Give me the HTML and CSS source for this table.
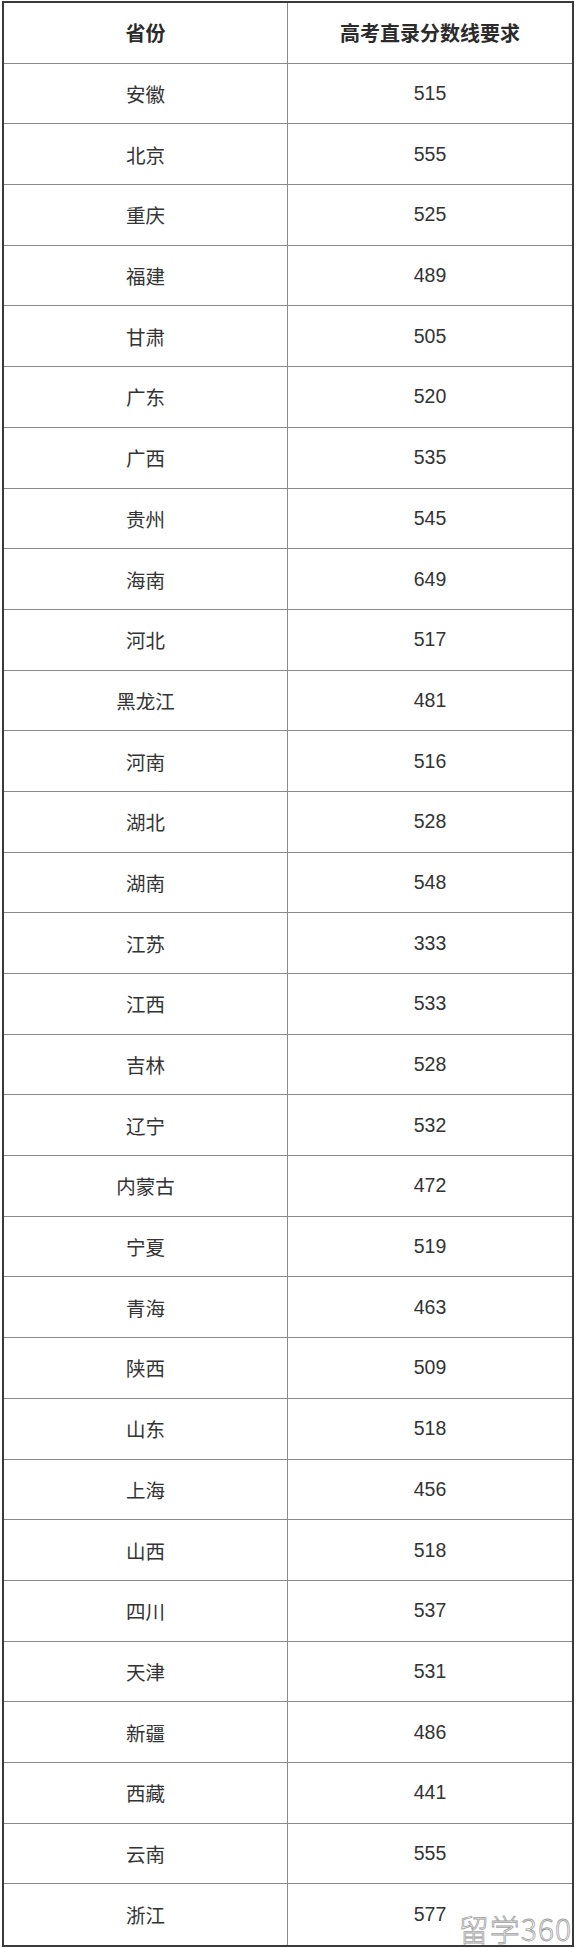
FILE: index.html
```html
<!DOCTYPE html>
<html lang="zh">
<head>
<meta charset="utf-8">
<title>高考直录分数线要求</title>
<link rel="stylesheet" href="styles.css">
</head>
<body>
<div class="page">
<table class="scores">
<thead>
<tr><th>省份</th><th>高考直录分数线要求</th></tr>
</thead>
<tbody>
<tr><td>安徽</td><td>515</td></tr>
<tr><td>北京</td><td>555</td></tr>
<tr><td>重庆</td><td>525</td></tr>
<tr><td>福建</td><td>489</td></tr>
<tr><td>甘肃</td><td>505</td></tr>
<tr><td>广东</td><td>520</td></tr>
<tr><td>广西</td><td>535</td></tr>
<tr><td>贵州</td><td>545</td></tr>
<tr><td>海南</td><td>649</td></tr>
<tr><td>河北</td><td>517</td></tr>
<tr><td>黑龙江</td><td>481</td></tr>
<tr><td>河南</td><td>516</td></tr>
<tr><td>湖北</td><td>528</td></tr>
<tr><td>湖南</td><td>548</td></tr>
<tr><td>江苏</td><td>333</td></tr>
<tr><td>江西</td><td>533</td></tr>
<tr><td>吉林</td><td>528</td></tr>
<tr><td>辽宁</td><td>532</td></tr>
<tr><td>内蒙古</td><td>472</td></tr>
<tr><td>宁夏</td><td>519</td></tr>
<tr><td>青海</td><td>463</td></tr>
<tr><td>陕西</td><td>509</td></tr>
<tr><td>山东</td><td>518</td></tr>
<tr><td>上海</td><td>456</td></tr>
<tr><td>山西</td><td>518</td></tr>
<tr><td>四川</td><td>537</td></tr>
<tr><td>天津</td><td>531</td></tr>
<tr><td>新疆</td><td>486</td></tr>
<tr><td>西藏</td><td>441</td></tr>
<tr><td>云南</td><td>555</td></tr>
<tr><td>浙江</td><td>577</td></tr>
</tbody>
</table>
<div class="watermark">留学360</div>
</div>
</body>
</html>
```

FILE: styles.css
```css
html, body {
  margin: 0;
  padding: 0;
  background: #ffffff;
}
body {
  width: 578px;
  height: 1948px;
  font-family: "Liberation Sans", "Noto Sans CJK SC", sans-serif;
  color: #333333;
}
.page {
  position: relative;
  padding: 1px 0 0 2px;
}
.scores {
  width: 572px;
  border-collapse: separate;
  border-spacing: 0;
  border: 2px solid #3a3a3a;
  table-layout: fixed;
}
.scores th,
.scores td {
  height: 60.7px;
  padding: 0;
  text-align: center;
  vertical-align: middle;
  border-right: 1px solid #8a8a8a;
  border-bottom: 1px solid #8a8a8a;
  box-sizing: border-box;
}
.scores th:last-child,
.scores td:last-child {
  border-right: none;
}
.scores tbody tr:last-child td {
  border-bottom: none;
}
.scores th {
  font-size: 20px;
  font-weight: bold;
  color: #2b2b2b;
}
.scores td {
  font-size: 19.5px;
  font-weight: normal;
}
.watermark {
  position: absolute;
  right: 6px;
  bottom: 4px;
  font-family: "Noto Sans CJK SC", sans-serif;
  font-size: 30px;
  font-weight: 300;
  line-height: 1;
  color: #ffffff;
  -webkit-text-stroke: 0.8px #a0a0a0;
  letter-spacing: 1px;
}
```
